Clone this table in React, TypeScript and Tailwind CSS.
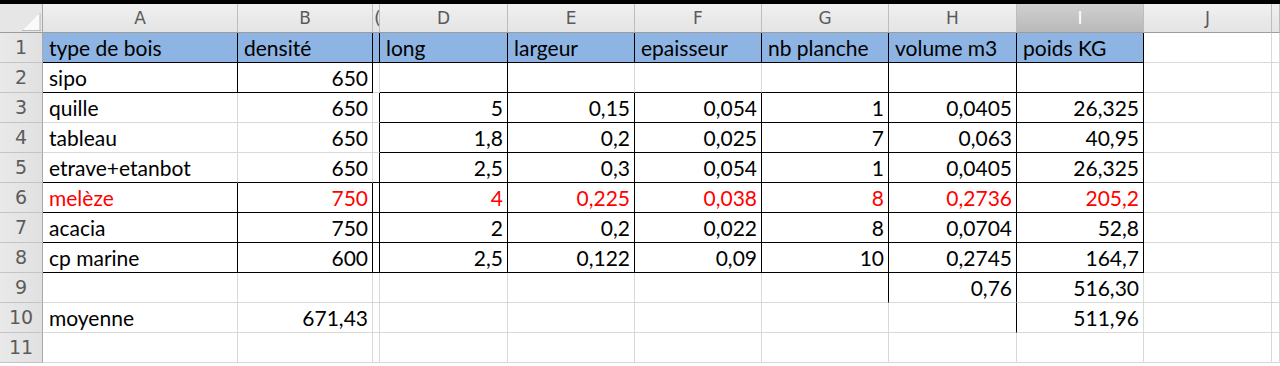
import React from "react";

const COLS = ["A", "B", "C", "D", "E", "F", "G", "H", "I", "J", "K"];
const WIDTHS = ["w-[195px]", "w-[135px]", "w-[7px]", "w-[128px]", "w-[127px]", "w-[127px]", "w-[127px]", "w-[128px]", "w-[127px]", "w-[128px]", "w-[8px]"];

type Row = { cells: string[]; red?: boolean };

const ROWS: Row[] = [
  { cells: ["type de bois", "densité", "", "long", "largeur", "epaisseur", "nb planche", "volume m3", "poids KG", "", ""] },
  { cells: ["sipo", "650", "", "", "", "", "", "", "", "", ""] },
  { cells: ["quille", "650", "", "5", "0,15", "0,054", "1", "0,0405", "26,325", "", ""] },
  { cells: ["tableau", "650", "", "1,8", "0,2", "0,025", "7", "0,063", "40,95", "", ""] },
  { cells: ["etrave+etanbot", "650", "", "2,5", "0,3", "0,054", "1", "0,0405", "26,325", "", ""] },
  { cells: ["melèze", "750", "", "4", "0,225", "0,038", "8", "0,2736", "205,2", "", ""], red: true },
  { cells: ["acacia", "750", "", "2", "0,2", "0,022", "8", "0,0704", "52,8", "", ""] },
  { cells: ["cp marine", "600", "", "2,5", "0,122", "0,09", "10", "0,2745", "164,7", "", ""] },
  { cells: ["", "", "", "", "", "", "", "0,76", "516,30", "", ""] },
  { cells: ["moyenne", "671,43", "", "", "", "", "", "", "511,96", "", ""] },
  { cells: ["", "", "", "", "", "", "", "", "", "", ""] },
];

function rightBlack(r: number, c: number): boolean {
  if (r === 1) return c <= 8;
  if (r === 2) return [0, 1, 3, 6, 7, 8].includes(c);
  if (r >= 3 && r <= 5) return c >= 2 && c <= 8;
  if (r >= 6 && r <= 8) return c <= 8;
  if (r === 9) return c === 6 || c === 7;
  if (r === 10) return c === 7;
  return false;
}

function bottomBlack(r: number, c: number): boolean {
  if (r === 1) return c <= 8;
  if (r === 2) return c <= 1 || (c >= 3 && c <= 8);
  if (r === 3 || r === 4) return c >= 3 && c <= 8;
  if (r >= 5 && r <= 8) return c <= 8;
  return false;
}

function isNumeric(s: string) {
  return /^[0-9][0-9,]*$/.test(s);
}

function Corner() {
  return (
    <div className="w-[43px] h-[29px] shrink-0 bg-[#e6e6e6] border-r border-b border-r-[#a9a9a9] border-b-[#9c9c9c] relative">
      <svg width="43" height="29" className="absolute left-0 top-0">
        <polygon points="23,26 40,26 40,9" fill="#fafafa" />
        <line x1="40" y1="9" x2="40" y2="27" stroke="#b8b8b8" strokeWidth="1" />
        <line x1="22" y1="26.5" x2="41" y2="26.5" stroke="#b8b8b8" strokeWidth="1" />
      </svg>
    </div>
  );
}

function ColHeader({ c }: { c: number }) {
  const sel = c === 8;
  const bg = sel
    ? "bg-gradient-to-b from-[#d0d0d0] to-[#b9b9b9] text-white"
    : "bg-gradient-to-b from-[#f0f0f0] to-[#e4e4e4] text-[#5a5a5a]";
  const label = COLS[c];
  return (
    <div
      className={`${WIDTHS[c]} h-[29px] shrink-0 border-r border-b border-r-[#bdbdbd] border-b-[#9c9c9c] flex items-center justify-center overflow-hidden font-['DejaVu_Sans',sans-serif] ${bg}`}
    >
      {c === 2 ? (
        <span className="ml-[3px] text-[18px] leading-none">(</span>
      ) : c === 10 ? null : (
        <span className="text-[17px] leading-none">{label}</span>
      )}
    </div>
  );
}

function Cell({ r, c, text, red }: { r: number; c: number; text: string; red?: boolean }) {
  const rb = rightBlack(r, c) ? "border-r-black" : "border-r-[#d9d9d9]";
  const bb = bottomBlack(r, c) ? "border-b-black" : "border-b-[#d9d9d9]";
  const blue = r === 1 && c <= 8 ? "bg-[#8db4e2]" : "bg-white";
  const align = isNumeric(text) ? "justify-end pr-[4px]" : "justify-start pl-[6px]";
  const color = red ? "text-[#ff0000]" : "text-black";
  return (
    <div
      className={`${WIDTHS[c]} h-[30px] shrink-0 border-r border-b ${rb} ${bb} ${blue} ${align} ${color} flex items-center overflow-visible whitespace-nowrap text-[21px] leading-none`}
    >
      {text}
    </div>
  );
}

export default function App() {
  return (
    <div className="w-[1280px] h-[366px] overflow-hidden bg-white font-['Lato',sans-serif]">
      <div className="h-[4px] bg-black" />
      <div className="flex">
        <Corner />
        {COLS.map((_, c) => (
          <ColHeader key={c} c={c} />
        ))}
      </div>
      {ROWS.map((row, i) => {
        const r = i + 1;
        return (
          <div key={r} className="flex">
            <div className="w-[43px] h-[30px] shrink-0 bg-gradient-to-r from-[#e9e9e9] to-[#e1e1e1] border-r border-b border-r-[#a9a9a9] border-b-[#c4c4c4] flex items-center justify-center text-[#5c5c5c] text-[19px] leading-none font-['DejaVu_Sans',sans-serif]">
              {r}
            </div>
            {row.cells.map((t, c) => (
              <Cell key={c} r={r} c={c} text={t} red={row.red} />
            ))}
          </div>
        );
      })}
    </div>
  );
}
